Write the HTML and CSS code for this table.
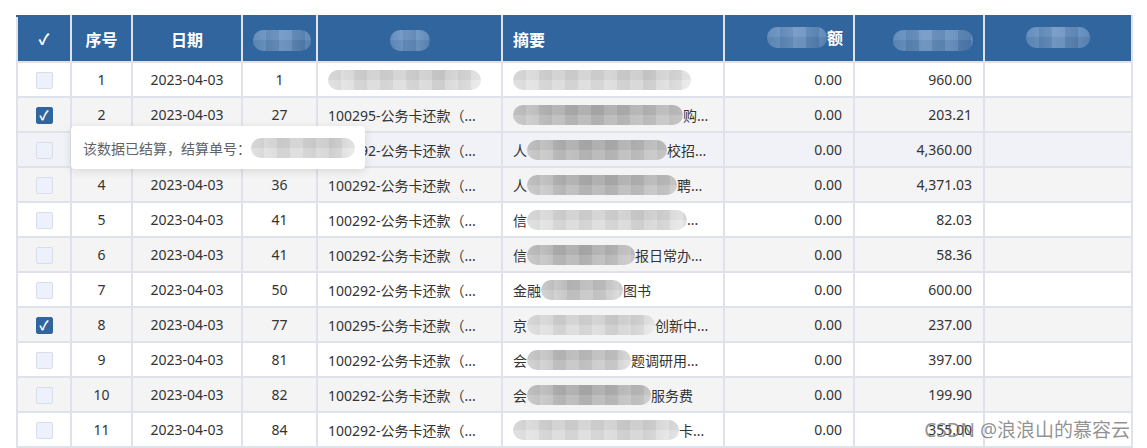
FILE: index.html
```html
<!DOCTYPE html>
<html lang="zh-CN">
<head>
<meta charset="utf-8">
<title>结算列表</title>
<link rel="stylesheet" href="styles.css">
</head>
<body>
<div class="page">
  <table class="grid">
    <colgroup>
      <col class="c-chk"><col class="c-idx"><col class="c-date"><col class="c-no"><col class="c-acct"><col class="c-sum"><col class="c-amt1"><col class="c-amt2"><col class="c-last">
    </colgroup>
    <thead>
      <tr>
        <th class="center"><span class="hcheck">✓</span></th>
        <th class="center">序号</th>
        <th class="center">日期</th>
        <th class="center"><span class="hblur w58 low"></span></th>
        <th class="center"><span class="hblur w40"></span></th>
        <th class="left">摘要</th>
        <th class="right"><span class="hrow"><span class="hblur w60"></span>额</span></th>
        <th class="right"><span class="hblur w80"></span></th>
        <th class="center"><span class="hblur w64 up"></span></th>
      </tr>
    </thead>
    <tbody>
      <tr>
        <td class="center"><span class="cb"></span></td>
        <td class="center">1</td><td class="center">2023-04-03</td><td class="center">1</td>
        <td class="left"><span class="blur light w153"></span></td>
        <td class="left"><div class="mix"><span class="blur light w178"></span></div></td>
        <td class="right">0.00</td><td class="right">960.00</td><td></td>
      </tr>
      <tr class="stripe">
        <td class="center"><span class="cb on">✓</span></td>
        <td class="center">2</td><td class="center">2023-04-03</td><td class="center">27</td>
        <td class="left">100295-公务卡还款（...</td>
        <td class="left"><div class="mix"><span class="blur dark w170"></span><span>购...</span></div></td>
        <td class="right">0.00</td><td class="right">203.21</td><td></td>
      </tr>
      <tr class="hover">
        <td class="center"><span class="cb"></span></td>
        <td class="center">3</td><td class="center">2023-04-03</td><td class="center">34</td>
        <td class="left">100292-公务卡还款（...</td>
        <td class="left"><div class="mix"><span>人</span><span class="blur dark w140"></span><span>校招...</span></div></td>
        <td class="right">0.00</td><td class="right">4,360.00</td><td></td>
      </tr>
      <tr class="stripe">
        <td class="center"><span class="cb"></span></td>
        <td class="center">4</td><td class="center">2023-04-03</td><td class="center">36</td>
        <td class="left">100292-公务卡还款（...</td>
        <td class="left"><div class="mix"><span>人</span><span class="blur dark w150"></span><span>聘...</span></div></td>
        <td class="right">0.00</td><td class="right">4,371.03</td><td></td>
      </tr>
      <tr>
        <td class="center"><span class="cb"></span></td>
        <td class="center">5</td><td class="center">2023-04-03</td><td class="center">41</td>
        <td class="left">100292-公务卡还款（...</td>
        <td class="left"><div class="mix"><span>信</span><span class="blur light w160"></span><span>...</span></div></td>
        <td class="right">0.00</td><td class="right">82.03</td><td></td>
      </tr>
      <tr class="stripe">
        <td class="center"><span class="cb"></span></td>
        <td class="center">6</td><td class="center">2023-04-03</td><td class="center">41</td>
        <td class="left">100292-公务卡还款（...</td>
        <td class="left"><div class="mix"><span>信</span><span class="blur dark w108"></span><span>报日常办...</span></div></td>
        <td class="right">0.00</td><td class="right">58.36</td><td></td>
      </tr>
      <tr>
        <td class="center"><span class="cb"></span></td>
        <td class="center">7</td><td class="center">2023-04-03</td><td class="center">50</td>
        <td class="left">100292-公务卡还款（...</td>
        <td class="left"><div class="mix"><span>金融</span><span class="blur mid w82"></span><span>图书</span></div></td>
        <td class="right">0.00</td><td class="right">600.00</td><td></td>
      </tr>
      <tr class="stripe">
        <td class="center"><span class="cb on">✓</span></td>
        <td class="center">8</td><td class="center">2023-04-03</td><td class="center">77</td>
        <td class="left">100295-公务卡还款（...</td>
        <td class="left"><div class="mix"><span>京</span><span class="blur light w128"></span><span>创新中...</span></div></td>
        <td class="right">0.00</td><td class="right">237.00</td><td></td>
      </tr>
      <tr>
        <td class="center"><span class="cb"></span></td>
        <td class="center">9</td><td class="center">2023-04-03</td><td class="center">81</td>
        <td class="left">100292-公务卡还款（...</td>
        <td class="left"><div class="mix"><span>会</span><span class="blur mid w104"></span><span>题调研用...</span></div></td>
        <td class="right">0.00</td><td class="right">397.00</td><td></td>
      </tr>
      <tr class="stripe">
        <td class="center"><span class="cb"></span></td>
        <td class="center">10</td><td class="center">2023-04-03</td><td class="center">82</td>
        <td class="left">100292-公务卡还款（...</td>
        <td class="left"><div class="mix"><span>会</span><span class="blur dark w124"></span><span>服务费</span></div></td>
        <td class="right">0.00</td><td class="right">199.90</td><td></td>
      </tr>
      <tr>
        <td class="center"><span class="cb"></span></td>
        <td class="center">11</td><td class="center">2023-04-03</td><td class="center">84</td>
        <td class="left">100292-公务卡还款（...</td>
        <td class="left"><div class="mix"><span class="blur light w166"></span><span>卡...</span></div></td>
        <td class="right">0.00</td><td class="right">355.00</td><td></td>
      </tr>
    </tbody>
  </table>

  <div class="tooltip">该数据已结算，结算单号：<span class="blur light w104"></span></div>
  <div class="watermark">CSDN @浪浪山的慕容云</div>
</div>
</body>
</html>
```

FILE: styles.css
```css
* { box-sizing: border-box; }

html, body {
  margin: 0;
  background: #ffffff;
}

body {
  font-family: "Noto Sans", "Noto Sans CJK SC", sans-serif;
  color: #333333;
  font-size: 14px;
}

.page {
  position: relative;
  width: 1147px;
  height: 448px;
  padding: 15px 16px 0 16px;
  overflow: hidden;
}

.grid {
  border-collapse: collapse;
  table-layout: fixed;
  width: 1115px;
}

.c-chk { width: 54px; }
.c-idx { width: 61px; }
.c-date { width: 110px; }
.c-no { width: 75px; }
.c-acct { width: 185px; }
.c-sum { width: 222px; }
.c-amt1 { width: 130px; }
.c-amt2 { width: 130px; }
.c-last { width: 148px; }

.grid th,
.grid td {
  border: 2px solid #dfe2ea;
  padding: 0 10px;
  white-space: nowrap;
  overflow: hidden;
}

.grid th {
  background: #31659e;
  color: #ffffff;
  font-size: 16px;
  font-weight: bold;
  height: 46px;
  border-top-color: #31659e;
}

.grid td {
  height: 35px;
  background: #ffffff;
}

.grid tr.stripe td { background: #f4f4f5; }
.grid tr.hover td { background: #f0f2f8; }

.center { text-align: center; }
.left { text-align: left; }
.right { text-align: right; }
.grid td.right { padding-right: 11px; }

.hcheck {
  font-size: 15px;
  font-weight: bold;
}

.hrow {
  display: inline-flex;
  align-items: center;
}

.hblur {
  display: inline-block;
  vertical-align: middle;
  height: 21px;
  border-radius: 10px;
  background:
    repeating-linear-gradient(90deg, rgba(255,255,255,0.08) 0 13px, rgba(0,0,0,0.04) 13px 26px),
    linear-gradient(180deg, rgba(255,255,255,0.05) 50%, rgba(0,0,0,0.04) 50%),
    linear-gradient(90deg, #4f7eb3, #6a93c2 40%, #5f8abb 70%, #4b7ab0);
  filter: blur(0.5px);
}
.hblur.low { margin-top: 2px; }
.hblur.up { margin-top: -6px; }

.cb {
  display: inline-block;
  width: 17px;
  height: 17px;
  border: 1px solid #d8dde8;
  border-radius: 2px;
  background: #edf1fb;
  vertical-align: middle;
  color: #ffffff;
  font-size: 13px;
  font-weight: bold;
  line-height: 15px;
  text-align: center;
}
.cb.on {
  background: #31659e;
  border-color: #31659e;
}

.mix {
  display: flex;
  align-items: center;
  white-space: nowrap;
  overflow: hidden;
}

.blur {
  display: inline-block;
  flex: none;
  height: 20px;
  border-radius: 10px;
  vertical-align: middle;
  filter: blur(0.6px);
  background:
    repeating-linear-gradient(90deg, rgba(0,0,0,0.035) 0 13px, rgba(255,255,255,0.08) 13px 26px),
    linear-gradient(180deg, rgba(0,0,0,0.03) 50%, rgba(255,255,255,0.1) 50%),
    var(--blob);
}
.blur.light { --blob: linear-gradient(90deg, #e6e6e6, #d6d6d6 25%, #dadada 50%, #d0d0d0 75%, #e8e8e8); }
.blur.mid { --blob: linear-gradient(90deg, #d8d8d8, #bdbdbd 30%, #c2c2c2 60%, #c8c8c8 85%, #dedede); }
.blur.dark { --blob: linear-gradient(90deg, #cdcdcd, #b5b5b5 25%, #aeaeae 50%, #b8b8b8 75%, #c6c6c6); }

.w40 { width: 40px; }
.w58 { width: 58px; }
.w60 { width: 60px; }
.w64 { width: 64px; }
.w80 { width: 80px; }
.w82 { width: 82px; }
.w104 { width: 104px; }
.w108 { width: 108px; }
.w124 { width: 124px; }
.w128 { width: 128px; }
.w140 { width: 140px; }
.w150 { width: 150px; }
.w153 { width: 153px; }
.w160 { width: 160px; }
.w166 { width: 166px; }
.w170 { width: 170px; }
.w178 { width: 178px; }

.tooltip {
  position: absolute;
  left: 71px;
  top: 126px;
  width: 294px;
  height: 43px;
  padding: 0 12px;
  display: flex;
  align-items: center;
  background: #ffffff;
  border-radius: 4px;
  box-shadow: 0 2px 10px rgba(0,0,0,0.12);
  color: #606266;
  font-size: 14px;
  white-space: nowrap;
}

.watermark {
  position: absolute;
  right: 17px;
  bottom: 5px;
  font-family: "Noto Sans", "Noto Sans CJK SC", sans-serif;
  font-size: 19px;
  color: rgba(110,110,110,0.75);
  white-space: nowrap;
}
```
